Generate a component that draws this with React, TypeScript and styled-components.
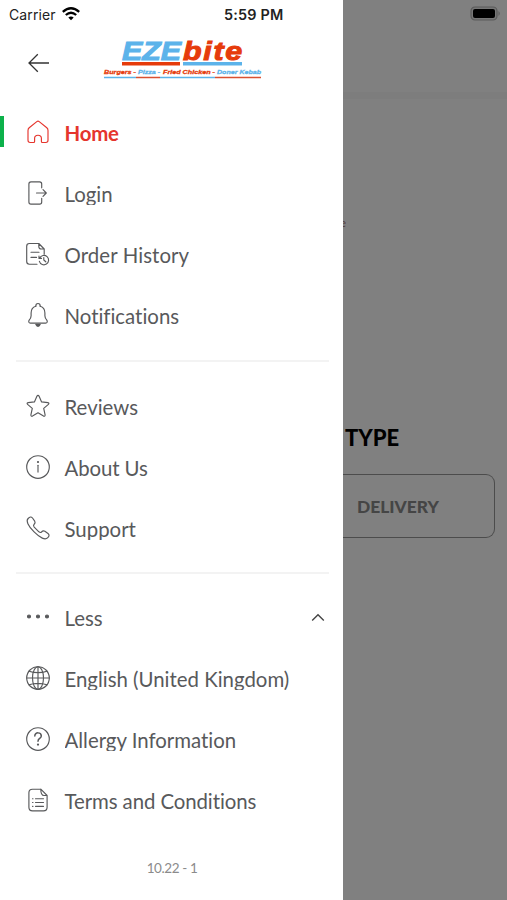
import React from "react";
import styled, { createGlobalStyle } from "styled-components";

const GlobalStyle = createGlobalStyle`
  * { box-sizing: border-box; }
  body { margin: 0; background: #808080; }
`;

const Screen = styled.main`
  width: 507px;
  height: 900px;
  display: grid;
  grid-template-columns: 343px 164px;
  overflow: hidden;
  font-family: Lato, sans-serif;
`;

const Drawer = styled.aside`
  background: #fff;
  display: flex;
  flex-direction: column;
  overflow: hidden;
`;

const StatusBar = styled.div`
  height: 28px;
  flex: none;
  display: flex;
  align-items: center;
  padding-left: 9px;
  font-family: Inter, sans-serif;
  font-size: 14px;
  color: #222;
`;

const Carrier = styled.span`
  width: 53px;
  letter-spacing: 0.12px;
  white-space: nowrap;
`;

const Clock = styled.span`
  margin-left: 144px;
  font-weight: 600;
  font-size: 14.4px;
  letter-spacing: 0.2px;
  white-space: nowrap;
`;

const Header = styled.header`
  height: 74px;
  flex: none;
  display: flex;
  align-items: flex-start;
`;

const BackButton = styled.button`
  margin: 24px 0 0 27px;
  width: 24px;
  height: 22px;
  padding: 0;
  border: 0;
  background: none;
  display: flex;
`;

const Logo = styled.svg`
  margin: 8px 0 0 53px;
  overflow: visible;
`;

const Row = styled.a<{ $active?: boolean }>`
  height: 61px;
  flex: none;
  display: flex;
  align-items: center;
  color: ${(p) => (p.$active ? "#e5352d" : "#58595b")};
`;

const Marker = styled.span<{ $active?: boolean }>`
  width: 4px;
  height: 31px;
  margin-top: -2px;
  background: ${(p) => (p.$active ? "#0db14b" : "transparent")};
`;

const IconSlot = styled.svg`
  width: 26px;
  height: 26px;
  margin: -1px 0 0 20.5px;
  flex: none;
  fill: none;
  stroke: currentColor;
  stroke-width: 1.15;
  stroke-linecap: round;
  stroke-linejoin: round;
`;

const Label = styled.span<{ $active?: boolean; $clip?: boolean; $spacing?: number }>`
  margin-left: 14px;
  height: 22px;
  line-height: 22px;
  margin-top: 1px;
  font-size: 20.4px;
  font-weight: ${(p) => (p.$active ? 700 : 400)};
  letter-spacing: ${(p) => p.$spacing ?? 0}px;
  font-variant-ligatures: none;
  white-space: nowrap;
  overflow: ${(p) => (p.$clip ? "hidden" : "visible")};
`;

const Chevron = styled.svg`
  margin-left: auto;
  margin-right: 18px;
`;

const Divider = styled.div<{ $height: number }>`
  height: ${(p) => p.$height}px;
  flex: none;
  display: flex;
  align-items: center;
  padding: 0 14px 0 16px;
  &::before {
    content: "";
    flex: 1;
    height: 2px;
    background: #f3f3f3;
  }
`;

const Version = styled.footer`
  margin-top: 28px;
  padding-left: 1px;
  text-align: center;
  font-size: 13.5px;
  letter-spacing: -0.4px;
  line-height: 18px;
  color: #8b8b8b;
`;

const Backdrop = styled.section`
  background: #808080;
  display: flex;
  flex-direction: column;
  overflow: hidden;
`;

const BatteryBar = styled.div`
  height: 92px;
  flex: none;
  display: flex;
  justify-content: flex-end;
  padding: 5px 5px 0 0;
`;

const Shade = styled.div`
  height: 7px;
  flex: none;
  background: #7d7d7d;
`;

const Sliver = styled.div`
  height: 13px;
  width: 3px;
  margin-top: 117px;
  display: flex;
  flex: none;
  justify-content: flex-end;
  overflow: hidden;
  font-size: 12px;
  line-height: 13px;
  color: #543c3c;
`;

const TypeTitle = styled.h2`
  margin: 195px 0 0 2px;
  font-size: 22px;
  line-height: 28px;
  font-weight: 900;
  color: #000;
`;

const DeliveryButton = styled.div`
  width: 152px;
  height: 64px;
  margin-top: 22px;
  padding-left: 14px;
  border: 1.5px solid #4c4c4c;
  border-left: 0;
  border-radius: 0 9px 9px 0;
  display: flex;
  align-items: center;
  font-size: 17.4px;
  font-weight: 900;
  color: #454545;
`;

type IconName =
  | "home" | "login" | "history" | "bell" | "star" | "info"
  | "phone" | "dots" | "globe" | "help" | "terms";

const icons: Record<IconName, React.ReactNode> = {
  home: <path d="M3 11.4Q3 9.8 4.2 8.8L11.8 2.6Q13 1.7 14.2 2.6L21.8 8.8Q23 9.8 23 11.4V21.3Q23 23.5 20.8 23.5H17.4Q16.4 23.5 16.4 22.5V19.3C16.4 15.2 9.6 15.2 9.6 19.3V22.5Q9.6 23.5 8.6 23.5H5.2Q3 23.5 3 21.3Z" />,
  login: <path d="M16.7 7.8V4Q16.7 1.9 14.6 1.9H6Q3.9 1.9 3.9 4V22Q3.9 24.1 6 24.1H14.6Q16.7 24.1 16.7 22V18.2M11.5 13H21.2M18 9.7L21.3 13L18 16.3" />,
  history: (
    <>
      <path d="M12 23.2H4.4Q1.7 23.2 1.7 20.5V5.2Q1.7 2.5 4.4 2.5H13.8L19.2 8V13.2M13.8 2.5V5.5Q13.8 8 16.3 8H19.2M6 11.2H14M6 16.4H11.5" />
      <path d="M14.7 17A4.7 4.7 0 1 1 14.4 20.4M14 15V17.4H16.5M18.8 16.6V19L20.8 20.8" />
    </>
  ),
  bell: (
    <>
      <path d="M10.8 4.2Q6.1 5.5 6.1 11V13.7Q6.1 16 4.2 18.2C3.3 19.5 3.7 21.1 5.4 21.1H20.6C22.3 21.1 22.7 19.5 21.8 18.2Q19.9 16 19.9 13.7V11Q19.9 5.5 15.2 4.2" />
      <path d="M10.8 4.2C10.8 .6 15.2 .6 15.2 4.2" />
      <path d="M10.8 22.4H15.2L13.8 24.2H12.2Z" fill="currentColor" />
    </>
  ),
  star: <path d="M13 2.3Q13.7 2.3 14.1 3.2L16.6 8.9L22.9 9.6Q24.6 10 23.4 11.4L18.7 15.4L20.1 21.9Q20.2 23.8 18.5 23.1L13 19.8L7.5 23.1Q5.8 23.8 5.9 21.9L7.3 15.4L2.6 11.4Q1.4 10 3.1 9.6L9.4 8.9L11.9 3.2Q12.3 2.3 13 2.3Z" />,
  info: (
    <>
      <circle cx="13" cy="13" r="11.3" />
      <path d="M13 11.2V18.1" />
      <circle cx="13" cy="8" r=".5" fill="currentColor" />
    </>
  ),
  phone: <path d="M3.1 3.5C4.8 1.7 6.2 1.4 7.5 3L9.7 6.1C10.6 7.6 10.2 8.4 9 9.5C8.2 10.3 8.4 11.1 9.2 12.1L13.9 16.8C14.9 17.6 15.7 17.8 16.5 17C17.6 15.8 18.4 15.4 19.9 16.3L23 18.5C24.6 19.8 24.3 21.2 22.5 22.9C20.2 25.2 15.4 23.2 9.1 16.9C2.8 10.6.8 5.8 3.1 3.5Z" />,
  dots: (
    <>
      {[4, 13, 22].map((x) => <circle key={x} cx={x} cy="12.5" r="1.5" fill="currentColor" />)}
    </>
  ),
  globe: (
    <>
      <circle cx="13" cy="13" r="11.3" />
      <ellipse cx="13" cy="13" rx="5.5" ry="11.3" />
      <path d="M13 1.7V24.3M1.7 13H24.3M4 6.2Q13 9.2 22 6.2M4 19.8Q13 16.8 22 19.8" />
    </>
  ),
  help: (
    <>
      <circle cx="13" cy="13" r="11.3" />
      <path d="M9.8 10C9.8 5.7 16.3 6 16.3 9.9C16.3 12.5 13 12.4 13 15.2" strokeWidth="1.5" />
      <circle cx="13" cy="18.6" r=".55" fill="currentColor" />
    </>
  ),
  terms: (
    <>
      <path d="M15.8 2.2H7.5Q3.9 2.2 3.9 5.8V20.2Q3.9 23.8 7.5 23.8H18.5Q22.1 23.8 22.1 20.2V8.5L15.8 2.2Q15.8 8.5 19 8.5H22.1" />
      <path d="M10.5 11.7H18.5M10.5 15.5H18.5M10.5 19.3H18.5M7.5 11.7H8M7.5 15.5H8M7.5 19.3H8" />
    </>
  ),
};

interface ItemProps {
  icon: IconName;
  label: string;
  active?: boolean;
  clip?: boolean;
  spacing?: number;
  children?: React.ReactNode;
}

function MenuItem({ icon, label, active, clip, spacing, children }: ItemProps) {
  return (
    <Row $active={active}>
      <Marker $active={active} />
      <IconSlot viewBox="0 0 26 26">{icons[icon]}</IconSlot>
      <Label $active={active} $clip={clip} $spacing={spacing}>{label}</Label>
      {children}
    </Row>
  );
}

function BrandLogo() {
  return (
    <Logo width="158" height="44" viewBox="0 0 158 44">
      <g fontFamily="Liberation Sans" fontWeight="700" fontStyle="italic">
        <g fontSize="26.5" strokeWidth="1">
          <text x="18" y="23.5" fill="#5cb3ea" stroke="#5cb3ea" textLength="59" lengthAdjust="spacingAndGlyphs">EZE</text>
          <text x="79" y="23.5" fill="#e63b0b" stroke="#e63b0b" letterSpacing="1.5" textLength="61" lengthAdjust="spacingAndGlyphs">bite</text>
        </g>
        <g fontSize="6" strokeWidth=".3">
          <text x="0" y="38.3" fill="#e63b0b" stroke="#e63b0b" textLength="32" lengthAdjust="spacingAndGlyphs">Burgers -</text>
          <text x="34" y="38.3" fill="#5cb3ea" stroke="#5cb3ea" textLength="22" lengthAdjust="spacingAndGlyphs">Pizza -</text>
          <text x="59" y="38.3" fill="#e63b0b" stroke="#e63b0b" textLength="52" lengthAdjust="spacingAndGlyphs">Fried Chicken -</text>
          <text x="113" y="38.3" fill="#5cb3ea" stroke="#5cb3ea" textLength="44" lengthAdjust="spacingAndGlyphs">Doner Kebab</text>
        </g>
      </g>
      <path d="M18 27.8H76" stroke="#e63b0b" strokeWidth="3.6" />
      <path d="M79 27.8H138" stroke="#5cb3ea" strokeWidth="3.6" />
      <path d="M0 41.5H32M56 41.5H111" stroke="#5cb3ea" strokeWidth="1.7" />
      <path d="M32 41.5H56M111 41.5H157" stroke="#d95132" strokeWidth="1.7" />
    </Logo>
  );
}

export default function App() {
  return (
    <>
      <GlobalStyle />
      <Screen>
        <Drawer>
          <StatusBar>
            <Carrier>Carrier</Carrier>
            <svg width="18" height="14" viewBox="0 0 18 14" fill="none" stroke="#000" strokeWidth="2.3">
              <path d="M.8 4.8Q9-2.2 17.2 4.8M3.8 8Q9 3.5 14.2 8" />
              <path d="M6.3 10.6Q9 8.2 11.7 10.6L9 13.3Z" fill="#000" stroke="none" />
            </svg>
            <Clock>5:59 PM</Clock>
          </StatusBar>
          <Header>
            <BackButton aria-label="Back">
              <svg width="24" height="22" viewBox="0 0 24 22" fill="none" stroke="#333" strokeWidth="1.3">
                <path d="M22 11H2M10.8 2.2L2 11L10.8 19.8" />
              </svg>
            </BackButton>
            <BrandLogo />
          </Header>
          <MenuItem icon="home" label="Home" active spacing={-0.2} />
          <MenuItem icon="login" label="Login" clip />
          <MenuItem icon="history" label="Order History" spacing={0.1} />
          <MenuItem icon="bell" label="Notifications" />
          <Divider $height={30} />
          <MenuItem icon="star" label="Reviews" />
          <MenuItem icon="info" label="About Us" spacing={-0.1} />
          <MenuItem icon="phone" label="Support" clip />
          <Divider $height={28} />
          <MenuItem icon="dots" label="Less">
            <Chevron width="14" height="10" viewBox="0 0 14 10" fill="none" stroke="#444" strokeWidth="1.4">
              <path d="M1.2 7.5L7 1.8L12.8 7.5" />
            </Chevron>
          </MenuItem>
          <MenuItem icon="globe" label="English (United Kingdom)" clip />
          <MenuItem icon="help" label="Allergy Information" clip />
          <MenuItem icon="terms" label="Terms and Conditions" spacing={-0.08} />
          <Version>10.22 - 1</Version>
        </Drawer>
        <Backdrop>
          <BatteryBar>
            <svg width="32" height="16" viewBox="0 0 32 16">
              <rect x="1" y="2" width="26" height="13" rx="4" fill="#777" stroke="#5a5a5a" strokeWidth="1.2" />
              <rect x="3" y="4" width="22" height="9" rx="2" fill="#000" />
              <path d="M28.5 6Q31 8.5 28.5 11Z" fill="#5a5a5a" />
            </svg>
          </BatteryBar>
          <Shade />
          <Sliver>e</Sliver>
          <TypeTitle>TYPE</TypeTitle>
          <DeliveryButton>DELIVERY</DeliveryButton>
        </Backdrop>
      </Screen>
    </>
  );
}
